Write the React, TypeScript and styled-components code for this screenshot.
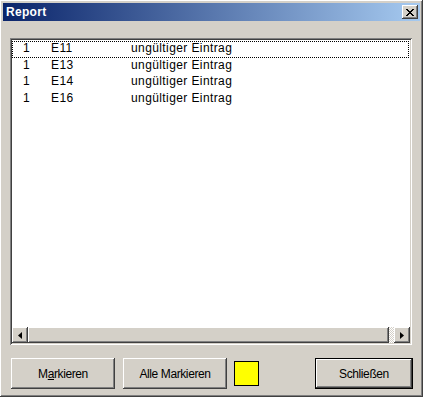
import styled, { createGlobalStyle, css } from "styled-components";

const rows = [
  { count: "1", code: "E11", text: "ungültiger Eintrag" },
  { count: "1", code: "E13", text: "ungültiger Eintrag" },
  { count: "1", code: "E14", text: "ungültiger Eintrag" },
  { count: "1", code: "E16", text: "ungültiger Eintrag" },
];

const face = "#d4d0c8";
const shadow = "#808080";
const dark = "#404040";

const raised = css`
  box-shadow:
    inset -1px -1px 0 ${dark},
    inset 1px 1px 0 #ffffff,
    inset -2px -2px 0 ${shadow},
    inset 2px 2px 0 ${face};
`;

const GlobalStyle = createGlobalStyle`
  html, body {
    margin: 0;
    padding: 0;
    background: ${face};
  }
  body {
    font-family: "Liberation Sans", Arial, sans-serif;
    font-size: 12px;
    letter-spacing: 0.4px;
    color: #000;
  }
`;

export default function App(): JSX.Element {
  return (
    <>
      <GlobalStyle />
      <Window>
        <TitleBar>
          <Title>Report</Title>
          <CloseButton>
            <svg width="8" height="7" viewBox="0 0 8 7">
              <path
                d="M0 0h2v1h1v1h2V1h1V0h2v1H7v1H6v1H5v1h1v1h1v1h1v1H6V6H5V5H3v1H2v1H0V6h1V5h1V4h1V3H2V2H1V1H0z"
                fill="#000"
              />
            </svg>
          </CloseButton>
        </TitleBar>
        <Content>
          <ListBox>
            <ListItems>
              {rows.map((r, i) => (
                <Row key={r.code} $focused={i === 0}>
                  <span>{r.count}</span>
                  <span>{r.code}</span>
                  <span>{r.text}</span>
                </Row>
              ))}
            </ListItems>
            <ScrollBar>
              <ArrowButton>
                <svg width="4" height="7" viewBox="0 0 4 7">
                  <path d="M4 0v7L0 3.5z" fill="#000" />
                </svg>
              </ArrowButton>
              <Thumb />
              <Track />
              <ArrowButton>
                <svg width="4" height="7" viewBox="0 0 4 7">
                  <path d="M0 0v7l4-3.5z" fill="#000" />
                </svg>
              </ArrowButton>
            </ScrollBar>
          </ListBox>
          <ButtonRow>
            <Button $width={104}>
              M<u>a</u>rkieren
            </Button>
            <Button $width={104}>Alle Markieren</Button>
            <Swatch $color="#ffff00" />
            <DefaultButton $width={98}>Schließen</DefaultButton>
          </ButtonRow>
        </Content>
      </Window>
    </>
  );
}

const Window = styled.div`
  width: 423px;
  height: 397px;
  box-sizing: border-box;
  padding: 3px;
  background: ${face};
  display: flex;
  flex-direction: column;
  ${raised};
`;

const TitleBar = styled.div`
  height: 18px;
  flex: none;
  display: flex;
  align-items: center;
  justify-content: space-between;
  padding: 0 2px 0 2px;
  background: linear-gradient(to right, #0a246a, #a6caf0);
`;

const Title = styled.span`
  color: #fff;
  font-weight: bold;
  font-size: 12px;
  letter-spacing: 0.3px;
  padding-left: 1px;
`;

const CloseButton = styled.div`
  width: 16px;
  height: 14px;
  box-sizing: border-box;
  display: flex;
  align-items: center;
  justify-content: center;
  background: ${face};
  ${raised};
`;

const Content = styled.div`
  flex: 1;
  display: flex;
  flex-direction: column;
  padding: 17px 7px 0 7px;
`;

const ListBox = styled.div`
  width: 402px;
  height: 307px;
  box-sizing: border-box;
  padding: 2px;
  display: flex;
  flex-direction: column;
  background: #fff;
  box-shadow:
    inset 1px 1px 0 ${shadow},
    inset -1px -1px 0 #ffffff,
    inset 2px 2px 0 ${dark},
    inset -2px -2px 0 ${face};
`;

const ListItems = styled.div`
  flex: 1;
  padding-top: 1px;
`;

const Row = styled.div<{ $focused?: boolean }>`
  display: grid;
  grid-template-columns: 28px 80px 1fr;
  height: 16.5px;
  line-height: 13px;
  padding-left: 10px;
  box-sizing: border-box;
  border: 1px dotted ${(p) => (p.$focused ? "#000" : "transparent")};
  margin-right: 1px;
`;

const ScrollBar = styled.div`
  height: 16px;
  flex: none;
  display: flex;
  background: ${face};
`;

const ArrowButton = styled.div`
  width: 16px;
  height: 16px;
  flex: none;
  box-sizing: border-box;
  display: flex;
  align-items: center;
  justify-content: center;
  background: ${face};
  ${raised};
`;

const Thumb = styled.div`
  flex: 1;
  background: ${face};
  ${raised};
`;

const Track = styled.div`
  width: 5px;
  background-color: ${face};
  background-image: repeating-conic-gradient(#ffffff 0 25%, ${face} 0 50%);
  background-size: 2px 2px;
`;

const ButtonRow = styled.div`
  display: flex;
  align-items: center;
  margin-top: 13px;
  padding-left: 1px;
  gap: 8px;
`;

const Button = styled.div<{ $width: number }>`
  width: ${(p) => p.$width}px;
  height: 31px;
  box-sizing: border-box;
  display: flex;
  align-items: center;
  justify-content: center;
  font-size: 12px;
  letter-spacing: -0.4px;
  background: ${face};
  ${raised};
`;

const DefaultButton = styled(Button)`
  margin-left: auto;
  box-shadow:
    inset 0 0 0 1px #000,
    inset -2px -2px 0 ${dark},
    inset 2px 2px 0 #ffffff,
    inset -3px -3px 0 ${shadow},
    inset 3px 3px 0 ${face};
`;

const Swatch = styled.div<{ $color: string }>`
  width: 25px;
  height: 25px;
  box-sizing: border-box;
  border: 1px solid #000;
  background: ${(p) => p.$color};
  margin-left: -1px;
`;
